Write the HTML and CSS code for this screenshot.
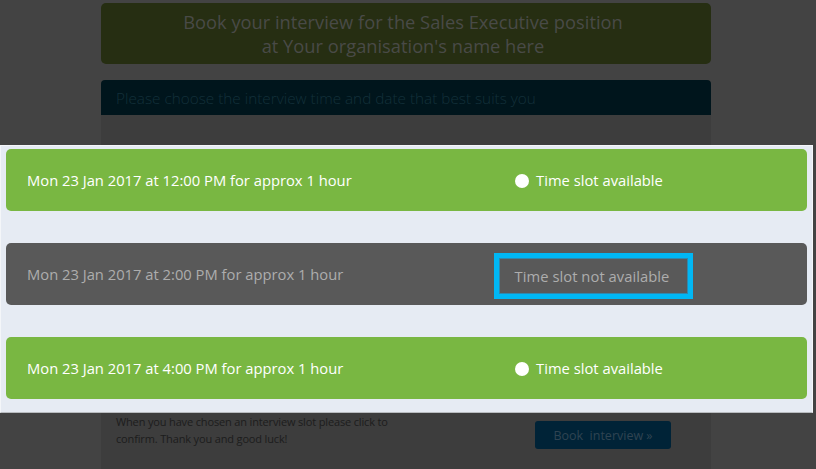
FILE: index.html
```html
<!DOCTYPE html>
<html>

<head>
    <title>Book your interview</title>
    <link rel="stylesheet" href="styles.css">
</head>

<body>
    <div class="page">
        <div class="header">
            Book your interview for the Sales Executive position<br>
            at Your organisation's name here
        </div>
        <div class="choose-bar">Please choose the interview time and date that best suits you</div>
        <div class="card-body">
            <div class="slots-space"></div>
            <div class="footer">
                <p class="footer-text">When you have chosen an interview slot please click to<br>
                    confirm. Thank you and good luck!</p>
                <button class="book-button">Book&nbsp; interview&nbsp;»</button>
            </div>
        </div>
    </div>

    <!-- highlighted slots, shown over the dimmed page -->
    <div class="slots">
        <div class="slot available">
            <div class="slot-time">Mon 23 Jan 2017 at 12:00 PM for approx 1 hour</div>
            <div class="slot-status"><span class="radio"></span>Time slot available</div>
        </div>
        <div class="slot taken">
            <div class="slot-time">Mon 23 Jan 2017 at 2:00 PM for approx 1 hour</div>
            <div class="slot-status"><span class="not-available">Time slot not available</span></div>
        </div>
        <div class="slot available">
            <div class="slot-time">Mon 23 Jan 2017 at 4:00 PM for approx 1 hour</div>
            <div class="slot-status"><span class="radio"></span>Time slot available</div>
        </div>
    </div>
</body>

</html>
```

FILE: styles.css
```css
body {
    margin: 0;
    padding-top: 3px;
    background-color: #434343;
    font-family: 'Open Sans', 'Liberation Sans', sans-serif;
    position: relative;
}

.page {
    width: 610px;
    margin-left: 101px;
}

.header {
    height: 61px;
    box-sizing: border-box;
    padding: 7px 6px 0 0;
    background-color: #262e12;
    border-radius: 5px;
    color: #494a47;
    font-size: 18.3px;
    line-height: 24px;
    text-align: center;
}

.choose-bar {
    margin-top: 16px;
    height: 35px;
    box-sizing: border-box;
    padding: 7px 15px 0;
    background-color: #00151c;
    border-radius: 4px 4px 0 0;
    color: #13303a;
    font-size: 15.3px;
    font-weight: 300;
    line-height: 22px;
}

.card-body {
    background-color: #3d3d3d;
    height: 354px;
}

.slots-space {
    height: 298px;
}

.footer {
    display: flex;
    justify-content: space-between;
    align-items: flex-start;
    padding: 0 40px 0 15px;
}

.footer-text {
    margin: 0;
    color: #1c1c1c;
    font-size: 11px;
    letter-spacing: -0.15px;
    line-height: 17px;
}

.book-button {
    margin-top: 8px;
    width: 136px;
    height: 28px;
    border: none;
    border-radius: 3px;
    background-color: #002337;
    color: #2f4352;
    font-family: inherit;
    font-size: 12.5px;
}

.slots {
    position: absolute;
    left: 0;
    top: 145px;
    width: 813px;
    height: 268px;
    box-sizing: border-box;
    padding: 3px 5px 0;
    background-color: #e6ebf3;
    border: 1px solid #f4f6f9;
    border-bottom-color: #b9bcc0;
    display: flex;
    flex-direction: column;
    gap: 32px;
}

.slot {
    height: 62px;
    display: grid;
    grid-template-columns: 374px 1fr;
    align-items: center;
    border-radius: 5px;
    font-size: 14.75px;
}

.slot-time {
    padding-left: 21px;
}

.slot-status {
    display: flex;
    justify-content: center;
    align-items: center;
}

.available {
    background-color: #79b742;
    color: #ffffff;
}

.taken {
    background-color: #595959;
    color: #adadad;
}

.radio {
    width: 14px;
    height: 14px;
    margin: 2px 7px 0 -9px;
    border-radius: 50%;
    background-color: #ffffff;
}

.not-available {
    display: block;
    margin-top: 4px;
    padding: 0 19px 0 16px;
    height: 36px;
    line-height: 36px;
    letter-spacing: 0.05px;
    border: 5px solid #00b7f4;
    box-shadow: inset 0 0 0 1px #2f88ad;
}
```
